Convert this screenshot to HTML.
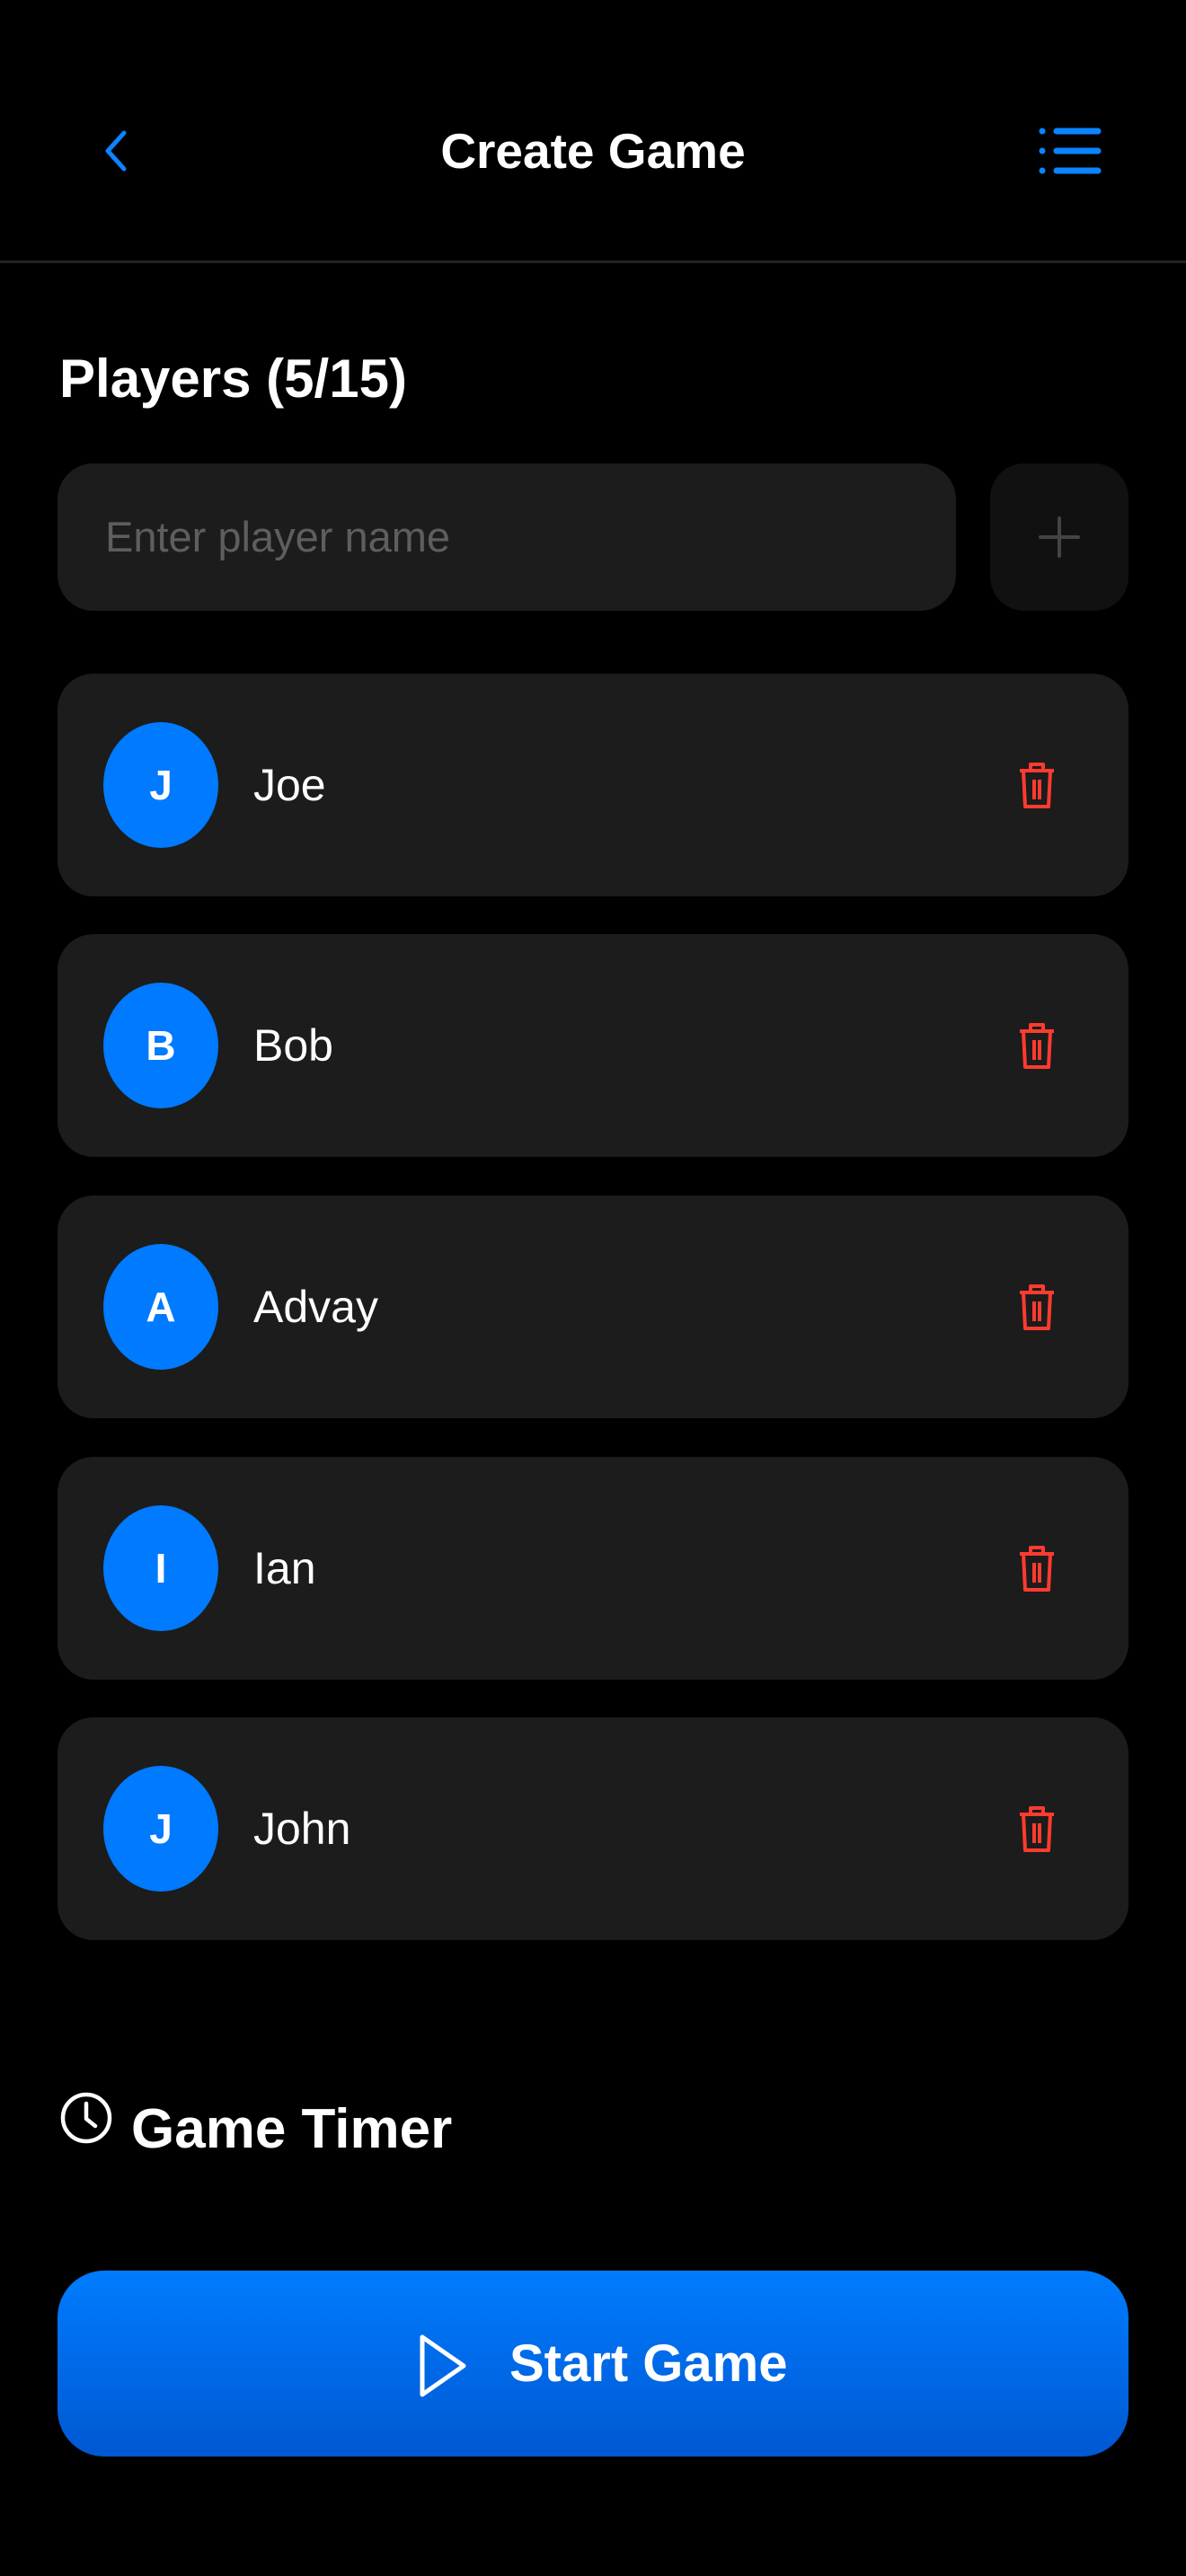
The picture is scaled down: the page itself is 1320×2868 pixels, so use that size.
<!DOCTYPE html>
<html><head><meta charset="utf-8"><style>
*{margin:0;padding:0;box-sizing:border-box}
body{width:1320px;height:2868px;background:#000;font-family:"Liberation Sans",sans-serif;color:#fff;position:relative;overflow:hidden}
.abs{position:absolute}
.title{left:0;width:1320px;top:134px;text-align:center;font-size:55px;font-weight:bold;line-height:68px}
.div{left:0;top:290px;width:1320px;height:3px;background:#222}
.h{left:66px;top:384px;font-size:60px;font-weight:bold;line-height:76px}
.inp{left:64px;top:516px;width:1000px;height:164px;background:#1c1c1c;border-radius:40px}
.ph{left:117px;top:568px;font-size:47px;color:#5e5e5e;line-height:60px}
.plus{left:1102px;top:516px;width:154px;height:164px;background:#111;border-radius:38px}
.row{left:64px;width:1192px;height:248px;background:#1c1c1c;border-radius:40px}
.av{position:absolute;left:51px;top:54px;width:128px;height:140px;border-radius:50%;background:#007aff;text-align:center;line-height:140px;font-size:46px;font-weight:bold}
.nm{position:absolute;left:218px;top:94px;font-size:50px;line-height:60px}
.tr{position:absolute;left:1068px;top:97px}
.gt{left:146px;top:2333px;font-size:62px;font-weight:bold;line-height:76px}
.btn{left:64px;top:2528px;width:1192px;height:207px;border-radius:52px;background:linear-gradient(#007cfe,#0058d2)}
.bt{left:567px;top:2597px;font-size:58px;font-weight:bold;line-height:70px}
</style></head><body>
<svg class="abs" style="left:110px;top:142px" width="36" height="52" viewBox="0 0 36 52"><path d="M28 6 L10 26 L28 46" fill="none" stroke="#0a84ff" stroke-width="5" stroke-linecap="round" stroke-linejoin="round"/></svg>
<div class="abs title">Create Game</div>
<svg class="abs" style="left:1155px;top:138px" width="74" height="60" viewBox="0 0 74 60"><g stroke="#0a84ff" stroke-width="7" stroke-linecap="round"><path d="M5 8h0M5 30h0M5 52h0"/><path d="M21 8h46M21 30h46M21 52h46"/></g></svg>
<div class="abs div"></div>
<div class="abs h">Players (5/15)</div>
<div class="abs inp"></div>
<div class="abs ph">Enter player name</div>
<div class="abs plus"></div>
<svg class="abs" style="left:1155px;top:574px" width="48" height="48" viewBox="0 0 48 48"><path d="M24 3v42M3 24h42" stroke="#444" stroke-width="4" stroke-linecap="round"/></svg>

<div class="abs row" style="top:750px"><div class="av">J</div><div class="nm">Joe</div><svg class="tr" width="44" height="56" viewBox="0 0 44 56"><g fill="none" stroke="#ff3b30" stroke-width="4" stroke-linejoin="round"><path d="M3 11h38M15 11V4h14v7M7 11l2 40h26l2-40M19 21v22M25 21v22"/></g></svg></div>
<div class="abs row" style="top:1040px"><div class="av">B</div><div class="nm">Bob</div><svg class="tr" width="44" height="56" viewBox="0 0 44 56"><g fill="none" stroke="#ff3b30" stroke-width="4" stroke-linejoin="round"><path d="M3 11h38M15 11V4h14v7M7 11l2 40h26l2-40M19 21v22M25 21v22"/></g></svg></div>
<div class="abs row" style="top:1331px"><div class="av">A</div><div class="nm">Advay</div><svg class="tr" width="44" height="56" viewBox="0 0 44 56"><g fill="none" stroke="#ff3b30" stroke-width="4" stroke-linejoin="round"><path d="M3 11h38M15 11V4h14v7M7 11l2 40h26l2-40M19 21v22M25 21v22"/></g></svg></div>
<div class="abs row" style="top:1622px"><div class="av">I</div><div class="nm">Ian</div><svg class="tr" width="44" height="56" viewBox="0 0 44 56"><g fill="none" stroke="#ff3b30" stroke-width="4" stroke-linejoin="round"><path d="M3 11h38M15 11V4h14v7M7 11l2 40h26l2-40M19 21v22M25 21v22"/></g></svg></div>
<div class="abs row" style="top:1912px"><div class="av">J</div><div class="nm">John</div><svg class="tr" width="44" height="56" viewBox="0 0 44 56"><g fill="none" stroke="#ff3b30" stroke-width="4" stroke-linejoin="round"><path d="M3 11h38M15 11V4h14v7M7 11l2 40h26l2-40M19 21v22M25 21v22"/></g></svg></div>

<svg class="abs" style="left:66px;top:2328px" width="60" height="60" viewBox="0 0 60 60"><circle cx="30" cy="30" r="26" fill="none" stroke="#fff" stroke-width="4.5"/><path d="M30 14v17l10 8" fill="none" stroke="#fff" stroke-width="4.5" stroke-linecap="round" stroke-linejoin="round"/></svg>
<div class="abs gt">Game Timer</div>
<div class="abs btn"></div>
<svg class="abs" style="left:462px;top:2596px" width="64" height="76" viewBox="0 0 64 76"><path d="M8 6 L54 38 L8 70 Z" fill="none" stroke="#fff" stroke-width="5" stroke-linejoin="round"/></svg>
<div class="abs bt">Start Game</div>
</body></html>
